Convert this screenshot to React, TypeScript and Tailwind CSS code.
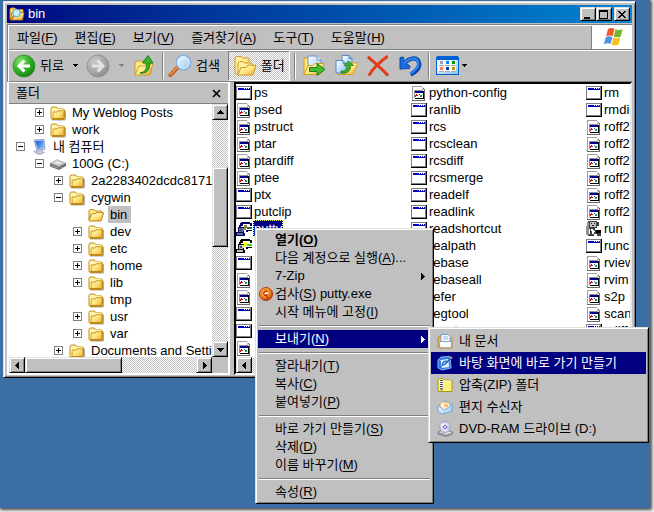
import { useState, type ReactNode } from "react";
import clsx from "clsx";

type FileKind = "app" | "script" | "putty" | "puttygen" | "run";
type FileEntry = { name: string; kind: FileKind };
type TreeEntry = {
  name: string;
  level: number;
  icon: "folder" | "open" | "computer" | "drive";
  toggle?: "+" | "-";
};

const TREE: TreeEntry[] = [
  { name: "My Weblog Posts", level: 1, icon: "folder", toggle: "+" },
  { name: "work", level: 1, icon: "folder", toggle: "+" },
  { name: "내 컴퓨터", level: 0, icon: "computer", toggle: "-" },
  { name: "100G (C:)", level: 1, icon: "drive", toggle: "-" },
  { name: "2a2283402dcdc81711c9", level: 2, icon: "folder", toggle: "+" },
  { name: "cygwin", level: 2, icon: "folder", toggle: "-" },
  { name: "bin", level: 3, icon: "open" },
  { name: "dev", level: 3, icon: "folder", toggle: "+" },
  { name: "etc", level: 3, icon: "folder", toggle: "+" },
  { name: "home", level: 3, icon: "folder", toggle: "+" },
  { name: "lib", level: 3, icon: "folder", toggle: "+" },
  { name: "tmp", level: 3, icon: "folder" },
  { name: "usr", level: 3, icon: "folder", toggle: "+" },
  { name: "var", level: 3, icon: "folder", toggle: "+" },
  { name: "Documents and Settings", level: 2, icon: "folder", toggle: "+" },
];

const LEVELS = ["pl-[7px]", "pl-[26px]", "pl-[45px]", "pl-[64px]"];

const a = (name: string): FileEntry => ({ name, kind: "app" });
const s = (name: string): FileEntry => ({ name, kind: "script" });

const COLUMNS: FileEntry[][] = [
  [
    a("ps"), s("psed"), s("pstruct"), s("ptar"), s("ptardiff"), s("ptee"), a("ptx"), a("putclip"),
    { name: "putty", kind: "putty" },
    { name: "", kind: "puttygen" },
    a(""), s(""), s(""), a(""), a(""), s(""),
  ],
  [
    s("python-config"), a("ranlib"), a("rcs"), a("rcsclean"), a("rcsdiff"), a("rcsmerge"), a("readelf"),
    a("readlink"), a("readshortcut"), a("realpath"), a("rebase"), s("rebaseall"), a("refer"), a("regtool"),
    a("reset"),
  ],
  [
    a("rm"), a("rmdir"), s("roff2dvi"), s("roff2html"), s("roff2pdf"), s("roff2ps"), s("roff2text"), s("roff2x"),
    { name: "run", kind: "run" },
    a("runc"), s("rview"), s("rvim"), s("s2p"), s("scan"), a("sdiff"),
  ],
];

const RAISED =
  "border border-t-[#dfdfdf] border-l-[#dfdfdf] border-r-black border-b-black bg-[#c0c0c0] shadow-[inset_1px_1px_0_#fff,inset_-1px_-1px_0_#808080]";
const CHECKER =
  "bg-[conic-gradient(#fff_25%,#c0c0c0_0_50%,#fff_0_75%,#c0c0c0_0)] bg-[length:2px_2px]";

function SharedDefs() {
  return (
    <svg className="absolute size-0" aria-hidden="true">
      <defs>
        <linearGradient id="gold" x1="0" y1="0" x2="1" y2="1">
          <stop offset="0" stopColor="#fffbc0" />
          <stop offset="0.55" stopColor="#ffe680" />
          <stop offset="1" stopColor="#e8a628" />
        </linearGradient>
        <radialGradient id="green" cx="0.35" cy="0.3" r="0.8">
          <stop offset="0" stopColor="#8be070" />
          <stop offset="0.5" stopColor="#35b32b" />
          <stop offset="1" stopColor="#117a10" />
        </radialGradient>
        <radialGradient id="silver" cx="0.35" cy="0.3" r="0.8">
          <stop offset="0" stopColor="#cacaca" />
          <stop offset="1" stopColor="#8b8b8b" />
        </radialGradient>
        <linearGradient id="sky" x1="0" y1="0" x2="1" y2="1">
          <stop offset="0" stopColor="#ffffff" />
          <stop offset="1" stopColor="#8cc4f4" />
        </linearGradient>
        <linearGradient id="screen" x1="0" y1="0" x2="1" y2="1">
          <stop offset="0" stopColor="#1b50d8" />
          <stop offset="1" stopColor="#7ec8ff" />
        </linearGradient>
        <radialGradient id="ember" cx="0.4" cy="0.35" r="0.7">
          <stop offset="0" stopColor="#ffe05a" />
          <stop offset="0.6" stopColor="#f08a1c" />
          <stop offset="1" stopColor="#a81c08" />
        </radialGradient>
      </defs>
    </svg>
  );
}

function Svg({ size = 16, crisp, children }: { size?: 16 | 24; crisp?: boolean; children: ReactNode }) {
  return (
    <svg
      viewBox={size === 16 ? "0 0 16 16" : "0 0 24 24"}
      className={clsx("shrink-0", size === 16 ? "size-4" : "size-6")}
      shapeRendering={crisp ? "crispEdges" : undefined}
      fill="none"
      aria-hidden="true"
    >
      {children}
    </svg>
  );
}

function FolderIcon() {
  return (
    <Svg>
      <path d="M2 15h13.5V6" stroke="#77777799" />
      <path d="M1 13.5V3.5l1-1.5h4.5l1.2 1.5H13l1.5 1.5v8.5l-.5 1H2z" fill="url(#gold)" stroke="#c08a1e" />
      <path d="M1.8 5.6h4.5L7.6 4H13" stroke="#fff6c0" />
      <path d="M3 7h4l1-1.2h6" stroke="#c89a2c" />
      <path d="M3.2 7.5v6M13.5 7v6" stroke="#d6a63a" />
      <path d="M2 13.6h12" stroke="#b97f12" />
    </Svg>
  );
}

function OpenFolderIcon() {
  return (
    <Svg>
      <path d="M1 13V4l1-1.5h4L7.5 4H13l1 1v3" fill="#ffe680" stroke="#c08a1e" />
      <path d="M1 13.5 3.4 7h4L8.5 5.7h7L13.4 13l-.9 1H1.5z" fill="url(#gold)" stroke="#b58010" />
      <path d="M4 8h4l1-1.2h5" stroke="#fffad0" />
    </Svg>
  );
}

function ComputerIcon() {
  return (
    <Svg>
      <path d="m3 1 10-.5 1 9.5-8 1.5z" fill="#d4dcea" stroke="#6c80a8" strokeWidth=".7" />
      <path d="m4.2 2 7.9-.4.8 7.4-6.1 1.2z" fill="url(#screen)" />
      <path d="m5.5 11.5 5-1 1 2 2 1-5 2.2-4-1.8z" fill="#c5cbdc" stroke="#8088a0" strokeWidth=".6" />
      <path d="m3 11 1.5 1-.5 2-1.5-1z" fill="#9fb8d8" />
    </Svg>
  );
}

function DriveIcon() {
  return (
    <Svg>
      <path d="m0 7.5 7-4 9 3.5v3l-7 4-9-3.5z" fill="#6c6c6c" />
      <path d="m0 7 7-3.5L16 7l-7 3.8z" fill="#c4c4c4" />
      <path d="m3 7 4-2 5 2-3 1.5z" fill="#e9e9e9" />
      <path d="m1 8.6 7.5 3v1.2L1 10z" fill="#9a9a9a" />
      <path d="M11 11.5h1.6" stroke="#5fd05f" />
    </Svg>
  );
}

function AppIcon() {
  return (
    <Svg crisp>
      <path d="M0 1h16v14H0z" fill="#000" />
      <path d="M0 1h15v13H0z" fill="#808080" />
      <path d="M1 2h13v11H1z" fill="#fff" />
      <path d="M2 3h12v2H2z" fill="#0000c0" />
      <path d="M8 3h1v1H8zM10 3h1v1h-1zM12 3h1v1h-1z" fill="#fff" />
    </Svg>
  );
}

function ScriptIcon() {
  return (
    <Svg crisp>
      <path d="M1 1h10v1h1v1h1v1h1v12H1z" fill="#686868" />
      <path d="M1 1h10v1H2v13H1z" fill="#a0a0a0" />
      <path d="M2 2h9v3h2v10H2z" fill="#fff" />
      <path d="M11 2h1v2h1v1h-2z" fill="#c8c8c8" />
      <path d="M3 5h9v8H3z" fill="#909090" />
      <path d="M12 6h1v8H4v-1h8z" fill="#000" />
      <path d="M4 6h8v7H4z" fill="#fff" />
      <path d="M4 6h8v2H4z" fill="#000090" />
      <path d="M5 9h1v1h1v1H5v1H4v-2h1z" fill="#d01010" />
      <path d="M8 9h1v1H8z" fill="#2040d0" />
      <path d="M9 10h2v2H9z" fill="#10a040" />
    </Svg>
  );
}

function PuttyIcon({ selected }: { selected?: boolean }) {
  const ink = selected ? "#000060" : "#000000";
  const body = selected ? "#5c6ca0" : "#c0c0c0";
  return (
    <Svg crisp>
      <path d="M5 1h9v1h2v3h-2V3H7v2H5v4H3V4h1V2h1z" fill={ink} />
      <path d="M2 6h6v6H2z" fill={ink} />
      <path d="M3 7h4v4H3z" fill={body} />
      <path d="M4 8h2v2H4z" fill="#305090" />
      <path d="M0 11h8v1h1v3H0z" fill={ink} />
      <path d="M1 12h6v2H1z" fill={body} />
      <path d="M8 4h3v2h1v1h-2v2H8v1H7V8H6V7h2z" fill={selected ? "#908040" : "#ffff00"} />
      <path d="M11 6h5v2h-5z" fill={selected ? "#107050" : "#20e020"} />
      <path d="M10 9h6v1h-4v1h-2z" fill={ink} />
    </Svg>
  );
}

function RunIcon() {
  return (
    <Svg crisp>
      <path d="M2 0h9v1h2v4h-2v2H9v2h2v3h2v-2h2v5h-4v-2H8V9H6v4h2v2H2v-2h2V8H2z" fill="#404040" />
      <path d="M1 1h2v13H0V5h1z" fill="#909090" />
      <path d="M4 1h6v5H4z" fill="#c0c0c0" />
      <path d="M5 2h1v1H5zM8 2h1v1H8zM6 4h2v1H6z" fill="#202020" />
      <path d="M5 8h2v2H5zM7 10h2v1H7z" fill="#fff" />
      <path d="M10 9h5v3h-5z" fill="#000" />
    </Svg>
  );
}

function FileIcon({ kind }: { kind: FileKind }) {
  if (kind === "script") return <ScriptIcon />;
  if (kind === "putty") return <PuttyIcon selected />;
  if (kind === "puttygen") return <PuttyIcon />;
  if (kind === "run") return <RunIcon />;
  return <AppIcon />;
}

function TreeIcon({ icon }: { icon: TreeEntry["icon"] }) {
  if (icon === "computer") return <ComputerIcon />;
  if (icon === "drive") return <DriveIcon />;
  if (icon === "open") return <OpenFolderIcon />;
  return <FolderIcon />;
}

function SearchFolderIcon() {
  return (
    <Svg>
      <path d="M1 13V3l1-1h4l1.5 1.5H14V8" fill="#ffd866" stroke="#c08a1e" />
      <path d="M1.5 14 3 6.5h12L13.5 14z" fill="url(#gold)" stroke="#b58010" />
      <path d="m5 10-3 4" stroke="#e07020" strokeWidth="2" />
      <circle cx="7.5" cy="7" r="3.8" fill="#c6ecff" stroke="#5c9ccc" />
    </Svg>
  );
}

function ArrowDisc({ forward }: { forward?: boolean }) {
  return (
    <Svg size={24}>
      <circle cx="12" cy="12" r="11" fill={forward ? "url(#silver)" : "url(#green)"} stroke={forward ? "#888" : "#2b8a20"} strokeWidth=".7" />
      <path
        d={forward ? "M6 12h10M11.5 6.5 17 12l-5.5 5.5" : "M18 12H8M12.5 6.5 7 12l5.5 5.5"}
        stroke={forward ? "#e4e4e4" : "#fff"}
        strokeWidth="3"
      />
    </Svg>
  );
}

function UpFolderIcon() {
  return (
    <Svg size={24}>
      <path d="M3 20V9l2-2h5l2 2h7v11z" fill="#ffe680" stroke="#cf9c26" />
      <path d="m3 21 4-9h6l1-2h7l-4 11z" fill="url(#gold)" stroke="#cf9c26" />
      <path d="M8 19c6-1 7-5 6.5-10h-4L16 1.5 21 9h-3.5c1 6-2 11-9.5 10z" fill="#37b52c" stroke="#1d7f18" />
    </Svg>
  );
}

function SearchIcon() {
  return (
    <Svg size={24}>
      <path d="m2.5 21 7-7.5" stroke="#ad4d18" strokeWidth="4" strokeLinecap="round" />
      <path d="m2.5 20.500 7-7.5" stroke="#f28b3c" strokeWidth="2.2" strokeLinecap="round" />
      <circle cx="15.5" cy="8.5" r="7.2" fill="url(#sky)" stroke="#86aee0" strokeWidth="1.6" />
      <circle cx="15.5" cy="8.5" r="5.8" stroke="#e2f4ff" />
    </Svg>
  );
}

function FoldersIcon() {
  return (
    <Svg size={24}>
      <path d="M2 17V4l1.5-1.5H8L9.5 4H15l1 1.5V8" fill="url(#gold)" stroke="#d09820" />
      <path d="M5 20V9l1.500-1.500H10L11.5 9H18l1 1.5V13" fill="#fff0a0" stroke="#d09820" />
      <path d="m5 21 3-7.5h5L15 11l8 .5L20 21z" fill="url(#gold)" stroke="#d09820" />
      <path d="M2 17v2l3 2" stroke="#d09820" />
    </Svg>
  );
}

function MoveToIcon() {
  return (
    <Svg size={24}>
      <path d="M2 20V4h5l2 2v14z" fill="#ffe680" stroke="#d0a020" />
      <path d="M6 2h9l4 4v13H6z" fill="url(#sky)" stroke="#6d92d0" />
      <path d="M15 2v4h4" fill="#fff" stroke="#6d92d0" />
      <path d="m2 20.5 4-9h5l2-2h9l-4 11z" fill="url(#gold)" stroke="#d0a020" />
      <path d="M7.5 13.5H15V9.5l8 6-8 6v-4H7.5z" fill="#45bb32" stroke="#208018" />
    </Svg>
  );
}

function CopyToIcon() {
  return (
    <Svg size={24}>
      <path d="M8 1.5h7l3 3V14H8z" fill="url(#sky)" stroke="#5b86cc" />
      <path d="M15 1.5v3h3" stroke="#5b86cc" />
      <path d="m4 20.5 4-10h6l1-1.5h9l-5 11.5z" fill="url(#gold)" stroke="#d0a020" />
      <path d="M2 6.5h7l3 3V19H2z" fill="url(#sky)" stroke="#5b86cc" />
      <path d="M9 6.5v3h3" stroke="#5b86cc" />
      <path d="M7 17c5 .5 6.5-2 6-5.5h-3L14.5 7l5 4.5h-3C17 17 13 20 7 19z" fill="#3cae28" stroke="#1d7f18" strokeWidth=".8" />
    </Svg>
  );
}

function DeleteIcon() {
  return (
    <Svg size={24}>
      <path d="M2 3c6 5 14 12 20 18.5M21.5 2.5C14 8 7 14 3 21.5" stroke="#9c2d10" strokeWidth="2.6" />
      <path d="M2 2.5c6 5 14 12 20 18.5M21.5 2C14 7.5 7 13.5 3 21" stroke="#f43b12" strokeWidth="2.2" />
    </Svg>
  );
}

function UndoIcon() {
  return (
    <Svg size={24}>
      <path d="M6 10c4-6 13-8 15-1.5 1.500 6-4 10-8.5 12" stroke="#0b47a8" strokeWidth="4.2" />
      <path d="M2 3.5 5.500 3 6 8l6 4-.5 2.500-9.500.5z" fill="#1d6ad8" stroke="#0b47a8" />
      <path d="M6 9.500c4-5 12-7.5 14-1.5 1.5 5.5-4 9-7.5 11.5" stroke="#2e82ec" strokeWidth="2.4" />
    </Svg>
  );
}

function ViewsIcon() {
  const dots = [
    ["#9c9ccc", 4, 8], ["#0b84e8", 10, 8], ["#079400", 16, 8],
    ["#ff7a52", 4, 14], ["#003c98", 10, 14], ["#cc9400", 16, 14],
  ] as const;
  return (
    <Svg size={24} crisp>
      <path d="M1 2h21v1h1v18H0V3h1z" fill="#0060d8" />
      <path d="M1 6h21v14H1z" fill="url(#sky)" />
      <path d="M2 7h18v11H2z" fill="#f6faff" />
      {dots.map(([fill, x, y]) => (
        <g key={fill}>
          <rect x={x} y={y - 1} width="3" height="3" fill={fill} />
          <rect x={x - 1} y={y + 3} width="5" height="1" fill="#a8a8a8" />
        </g>
      ))}
    </Svg>
  );
}

function WindowsFlag() {
  return (
    <Svg size={24}>
      <path d="M7 3c2.600-1.300 4.400-1.200 6.500-.2l-1.800 7.4c-2.200-1.100-4-1.100-6.600 0z" fill="#f0592b" />
      <path d="M14.500 3.200c2.600 1.100 4.500 1 7.200-.2l-2 7.400c-2.700 1.200-4.500 1.100-7 0z" fill="#76b82a" />
      <path d="M4.800 11.200c2.600-1.200 4.500-1.100 6.600 0l-1.800 6.800c-2.200-1.100-4-1.100-6.800.2z" fill="#4d93e6" />
      <path d="M12.500 11.600c2.600 1.100 4.500 1.100 6.900 0l-1.800 7c-2.600 1.300-4.500 1.200-7 0z" fill="#fbc01c" />
    </Svg>
  );
}

function ScanIcon() {
  return (
    <Svg>
      <circle cx="8" cy="8" r="6.5" fill="url(#ember)" stroke="#b8370c" />
      <circle cx="7.5" cy="7.500" r="3.6" fill="#fff3c0" stroke="#e87a18" strokeWidth="1.2" />
      <path d="M9.500 5.500C6.500 4.500 5 7 6 8.500s3 1 3-.5v4" stroke="#c4300c" strokeWidth="1.500" />
    </Svg>
  );
}

function DocumentsIcon() {
  return (
    <Svg>
      <path d="M1 14V5l1.5-2H5v12z" fill="#f0b83c" stroke="#b8862a" />
      <path d="M4 1.5h7l2 2V9H4z" fill="#fff" stroke="#6c9cdc" />
      <path d="M6 4h5M6 6h5" stroke="#8cb4e8" />
      <path d="M2 8.500h12.5V14l-1 1H3z" fill="#f6fbff" stroke="#7ea6d8" />
      <path d="M15 4v11H3" stroke="#c8962c" />
    </Svg>
  );
}

function DesktopIcon() {
  return (
    <Svg>
      <path d="M1 5 4 2l9-.5L14 13l-9 2-4-2z" fill="#2c7ce4" stroke="#80baf8" />
      <path d="m3.5 5 8-1 .5 8-7 1z" fill="#e8f5ff" />
      <path d="M6 11c-1.5-4 2-6 5-4" stroke="#1b64c8" strokeWidth="1.4" />
      <path d="m7 10 7.5-7.5" stroke="#1b64c8" strokeWidth="1.6" />
      <path d="m13.5 3.5 1.5-1.5" stroke="#f09040" strokeWidth="2" />
    </Svg>
  );
}

function ZipIcon() {
  return (
    <Svg>
      <path d="M1 14.5V3l1-1.5h4L7.5 3H14l1 1.5v10z" fill="#fff27a" stroke="#a89a10" />
      <path d="M2 5h5l1-1h6" stroke="#fffcd0" />
      <path d="M4.500 3v9" stroke="#fff" strokeWidth="3" />
      <path d="M4.500 3v9" stroke="#333" strokeWidth="2.5" strokeDasharray="1 1" />
      <path d="M3.500 11h2v2.5h-2z" fill="#777" />
    </Svg>
  );
}

function MailIcon() {
  return (
    <Svg>
      <path d="m1 7 7-5.5L15 5v7L5 15l-4-2.5z" fill="#b4dcfa" stroke="#78a8d4" />
      <path d="M3 7.5 4 3l8 .5 1 4.5-6 3z" fill="#fff3d8" stroke="#e0b080" />
      <path d="M7 5h4v3H7z" fill="#ffbe74" />
      <path d="m1 7 6.5 4L15 6v6.5L5 15l-4-2.5z" fill="url(#sky)" stroke="#78a8d4" strokeWidth=".8" />
    </Svg>
  );
}

function DiscDriveIcon() {
  return (
    <Svg>
      <path d="m1 11 5-2.5L15.5 11v2L9 15.5 1 13z" fill="#a2a2aa" stroke="#6c6c78" strokeWidth=".7" />
      <path d="m2 11 5-1.5 8 1.8-5.5 2z" fill="#e2e2ea" />
      <ellipse cx="8" cy="6" rx="5.2" ry="5.5" fill="#dcdcf4" stroke="#9090a8" strokeWidth=".8" />
      <path d="M8 6 5 1.8 3.2 4z" fill="#fff" />
      <path d="m8 6 4.800-1-.5 4z" fill="#b8c0f0" />
      <circle cx="8" cy="6" r="1.5" fill="#fff" stroke="#7458b8" />
    </Svg>
  );
}

function Caret({ muted }: { muted?: boolean }) {
  return (
    <svg viewBox="0 0 8 8" className="size-2" shapeRendering="crispEdges" aria-hidden="true">
      <path d="M1 2h5v1H5v1H4v1H3V4H2V3H1z" fill={muted ? "#808080" : "#000"} />
    </svg>
  );
}

function ScrollButton({ dir }: { dir: "up" | "down" | "left" | "right" }) {
  const paths = {
    up: "M6 4h1v1h1v1h1v1h1v1H3V7h1V6h1V5h1z",
    down: "M3 5h7v1H9v1H8v1H7v1H6V8H5V7H4V6H3z",
    left: "M7 3h1v7H7V9H6V8H5V7H4V6h1V5h1V4h1z",
    right: "M5 3h1v1h1v1h1v1h1v1H8v1H7v1H6v1H5z",
  };
  return (
    <button aria-label={"Scroll " + dir} className={clsx("flex size-4 shrink-0 items-center justify-center", RAISED)}>
      <svg viewBox="0 0 13 13" className="size-[13px] shrink-0" shapeRendering="crispEdges" aria-hidden="true">
        <path d={paths[dir]} fill="#000" />
      </svg>
    </button>
  );
}

function HotkeyLabel({ text, hotkey, rest }: { text: string; hotkey?: string; rest?: string }) {
  return (
    <span className="whitespace-pre">
      {text}
      {hotkey && (
        <>
          (<u className="underline-offset-2">{hotkey}</u>)
        </>
      )}
      {rest}
    </span>
  );
}

function TitleBar() {
  const button = clsx("flex h-[14px] w-4 items-center justify-center", RAISED);
  return (
    <header className="flex h-[18px] items-center bg-linear-to-r from-[#000080] to-[#1084d0] px-[2px] text-white">
      <SearchFolderIcon />
      <h1 className="ml-[3px] flex-1">bin</h1>
      <button aria-label="Minimize" className={button}>
        <svg viewBox="0 0 12 12" className="size-3 shrink-0" shapeRendering="crispEdges">
          <path d="M2 9h6v2H2z" />
        </svg>
      </button>
      <button aria-label="Maximize" className={button}>
        <svg viewBox="0 0 12 12" className="size-3 shrink-0" shapeRendering="crispEdges">
          <path d="M1 2h9v9H1zM2 4v6h7V4z" fillRule="evenodd" />
        </svg>
      </button>
      <button aria-label="Close" className={clsx("ml-[2px]", button)}>
        <svg viewBox="0 0 12 12" className="size-3 shrink-0" shapeRendering="crispEdges">
          <path d="M2 3h2v1h1v1h2V4h1V3h2v1H9v1H8v1H7v1h1v1h1v1h1v1H8V9H7V8H5v1H4v1H2V9h1V8h1V7h1V6H4V5H3V4H2z" />
        </svg>
      </button>
    </header>
  );
}

const MENUS = [
  ["파일", "F"],
  ["편집", "E"],
  ["보기", "V"],
  ["즐겨찾기", "A"],
  ["도구", "T"],
  ["도움말", "H"],
];

function MenuBar() {
  return (
    <nav className="flex h-[24px] border-b border-[#808080]">
      <div className="flex flex-1 items-center gap-px border-r border-[#808080]">
        {MENUS.map(([text, hotkey]) => (
          <button key={text} className="px-2">
            <HotkeyLabel text={text} hotkey={hotkey} />
          </button>
        ))}
      </div>
      <div className="flex w-10 items-center justify-center border-l border-white bg-white">
        <WindowsFlag />
      </div>
    </nav>
  );
}

function Divider() {
  return <div className="h-[26px] w-[2px] border-l border-[#808080] bg-white" />;
}

function Toolbar({ showTree, onToggleTree }: { showTree: boolean; onToggleTree: () => void }) {
  return (
    <div className="flex h-8 items-center border-t border-b border-t-white border-b-[#808080] pl-[3px]">
      <button className="flex items-center gap-1">
        <ArrowDisc />
        뒤로
      </button>
      <button aria-label="Back history" className="ml-2">
        <Caret />
      </button>
      <button aria-label="Forward" className="ml-[6px]">
        <ArrowDisc forward />
      </button>
      <button aria-label="Forward history" className="ml-2">
        <Caret muted />
      </button>
      <button aria-label="Up" className="mx-[6px]">
        <UpFolderIcon />
      </button>
      <Divider />
      <button className="ml-1 flex items-center gap-1">
        <SearchIcon />
        검색
      </button>
      <button
        aria-pressed={showTree}
        onClick={onToggleTree}
        className={clsx(
          "mx-2 mr-1 flex h-[30px] items-center gap-1 border border-t-[#808080] border-l-[#808080] border-r-white border-b-white px-1",
          showTree && CHECKER
        )}
      >
        <FoldersIcon />
        폴더
      </button>
      <Divider />
      <div className="mx-[6px] flex gap-2">
        <button aria-label="Move to"><MoveToIcon /></button>
        <button aria-label="Copy to"><CopyToIcon /></button>
        <button aria-label="Delete"><DeleteIcon /></button>
        <button aria-label="Undo"><UndoIcon /></button>
      </div>
      <Divider />
      <button aria-label="Views" className="ml-[6px] flex items-center gap-px">
        <ViewsIcon />
        <Caret />
      </button>
    </div>
  );
}

function TreePane({ onClose }: { onClose: () => void }) {
  return (
    <aside className="mr-1 flex w-[223px] shrink-0 flex-col border-t border-r-2 border-b-2 border-l-2 border-white">
      <div className="flex h-[21px] items-center justify-between border-b border-[#808080] px-[7px]">
        <h2>폴더</h2>
        <button aria-label="Close folders" onClick={onClose}>
          <svg viewBox="0 0 9 9" className="size-[9px]" aria-hidden="true">
            <path d="m1 1 7 7M8 1 1 8" stroke="#000" strokeWidth="1.6" />
          </svg>
        </button>
      </div>
      <div className="flex h-[253px]">
        <ul className="min-w-0 flex-1 overflow-hidden bg-white">
          {TREE.map((item) => (
            <li key={item.name} className={clsx("flex h-[17px] items-center whitespace-nowrap", LEVELS[item.level])}>
              {item.toggle ? (
                <button aria-label={"Toggle " + item.name} className="shrink-0">
                  <svg viewBox="0 0 9 9" className="size-[9px]" shapeRendering="crispEdges">
                    <path d="M0 0h9v9H0z" fill="#808080" />
                    <path d="M1 1h7v7H1z" fill="#fff" />
                    <path d={item.toggle === "+" ? "M2 4h2V2h1v2h2v1H5v2H4V5H2z" : "M2 4h5v1H2z"} fill="#000" />
                  </svg>
                </button>
              ) : (
                <span className="w-[9px] shrink-0" />
              )}
              <button className="ml-[6px] flex h-[17px] items-center gap-1">
                <TreeIcon icon={item.icon} />
                <span className={clsx("px-[2px] leading-[17px]", item.icon === "open" && "bg-[#c0c0c0] pr-1")}>
                  {item.name}
                </span>
              </button>
            </li>
          ))}
        </ul>
        <div className={clsx("flex w-4 flex-col", CHECKER)}>
          <ScrollButton dir="up" />
          <div className="flex-1" />
          <div className={clsx("h-20", RAISED)} />
          <div className="flex-2" />
          <ScrollButton dir="down" />
        </div>
      </div>
      <div className="flex h-4">
        <div className={clsx("flex flex-1", CHECKER)}>
          <ScrollButton dir="left" />
          <div className={clsx("w-[97px]", RAISED)} />
          <div className="flex-1" />
          <ScrollButton dir="right" />
        </div>
        <div className="w-4 bg-[#c0c0c0]" />
      </div>
    </aside>
  );
}

function FileList() {
  return (
    <main className="flex min-w-0 flex-1 flex-col border-2 border-t-black border-l-black border-r-[#e8e8e8] border-b-white bg-white">
      <div className="flex flex-1 overflow-hidden pb-px">
        {COLUMNS.map((files, i) => (
          <ul key={i} className="w-[175px] shrink-0">
            {files.map((file, j) => (
              <li key={j} className="h-[17px]">
                <button aria-label={file.name || "file"} className="flex h-[17px] items-center">
                  <FileIcon kind={file.kind} />
                  <span
                    className={clsx(
                      "ml-px px-px leading-[17px]",
                      file.kind === "putty" && "bg-[#000080] text-white outline-1 -outline-offset-1 outline-[#ffff60] outline-dotted"
                    )}
                  >
                    {file.name}
                  </span>
                </button>
              </li>
            ))}
          </ul>
        ))}
      </div>
      <div className={clsx("flex h-4", CHECKER)}>
        <ScrollButton dir="left" />
        <div className="flex-1" />
        <div className={clsx("w-6", RAISED)} />
        <div className="flex-1" />
        <ScrollButton dir="right" />
      </div>
    </main>
  );
}

type MenuEntry = {
  text: string;
  hotkey?: string;
  rest?: string;
  bold?: boolean;
  submenu?: boolean;
  active?: boolean;
  icon?: ReactNode;
};

const CONTEXT_GROUPS: MenuEntry[][] = [
  [
    { text: "열기", hotkey: "O", bold: true },
    { text: "다음 계정으로 실행", hotkey: "A", rest: "..." },
    { text: "7-Zip", submenu: true },
    { text: "검사", hotkey: "S", rest: " putty.exe", icon: <ScanIcon /> },
    { text: "시작 메뉴에 고정", hotkey: "I" },
  ],
  [{ text: "보내기", hotkey: "N", submenu: true, active: true }],
  [
    { text: "잘라내기", hotkey: "T" },
    { text: "복사", hotkey: "C" },
    { text: "붙여넣기", hotkey: "P" },
  ],
  [
    { text: "바로 가기 만들기", hotkey: "S" },
    { text: "삭제", hotkey: "D" },
    { text: "이름 바꾸기", hotkey: "M" },
  ],
  [{ text: "속성", hotkey: "R" }],
];

const SEND_TO: MenuEntry[] = [
  { text: "내 문서", icon: <DocumentsIcon /> },
  { text: "바탕 화면에 바로 가기 만들기", icon: <DesktopIcon />, active: true },
  { text: "압축(ZIP) 폴더", icon: <ZipIcon /> },
  { text: "편지 수신자", icon: <MailIcon /> },
  { text: "DVD-RAM 드라이브 (D:)", icon: <DiscDriveIcon /> },
];

function ContextMenu() {
  return (
    <div role="menu" className={clsx("absolute top-[228px] left-[255px] w-[179px] p-[2px]", RAISED)}>
      {CONTEXT_GROUPS.map((group, i) => (
        <div key={i}>
          {i > 0 && <div className="mx-px mt-1 mb-[3px] h-[2px] border-t border-b border-t-[#808080] border-b-white" />}
          {group.map((item) => (
            <button
              key={item.text}
              role="menuitem"
              className={clsx(
                "flex h-[18px] w-full items-center gap-px pr-[6px]",
                item.active && "bg-[#000080] text-white",
                item.bold && "font-bold"
              )}
            >
              <span className="flex w-4 justify-end">{item.icon}</span>
              <HotkeyLabel text={item.text} hotkey={item.hotkey} rest={item.rest} />
              {item.submenu && (
                <svg viewBox="0 0 4 7" className="ml-auto h-[7px] w-1" fill="currentColor" shapeRendering="crispEdges">
                  <path d="M0 0h1v1h1v1h1v1h1v1H3v1H2v1H1v1H0z" />
                </svg>
              )}
            </button>
          ))}
        </div>
      ))}
    </div>
  );
}

function SendToMenu() {
  return (
    <div role="menu" className={clsx("absolute top-[327px] left-[428px] w-[221px] p-[2px]", RAISED)}>
      {SEND_TO.map((item) => (
        <button
          key={item.text}
          role="menuitem"
          className={clsx("flex h-[22px] w-full items-center gap-[6px] pl-[6px]", item.active && "bg-[#000080] text-white")}
        >
          {item.icon}
          <HotkeyLabel text={item.text} />
        </button>
      ))}
    </div>
  );
}

export default function App() {
  const [showTree, setShowTree] = useState(true);

  return (
    <div className="flex min-h-screen bg-[#f4f4f4] pr-1 pb-1 font-['Liberation_Sans','Noto_Sans_CJK_KR',sans-serif] text-[13px] leading-4 text-black">
      <SharedDefs />
      <div className="relative min-w-0 flex-1 bg-[#3a6ea5] pt-px pr-[14px] pl-[3px] shadow-[1px_1px_3px_1px_#000000b0]">
        <div className="border border-t-[#dfdfdf] border-r-black border-b-black border-l-[#dfdfdf] bg-[#c0c0c0] p-[3px] pb-[2px] shadow-[inset_1px_1px_0_#fff,inset_-1px_-1px_0_#808080]">
          <TitleBar />
          <div className="mt-px border-t border-l border-[#808080]">
            <div className="border-t border-l border-white">
              <MenuBar />
              <Toolbar showTree={showTree} onToggleTree={() => setShowTree(!showTree)} />
            </div>
          </div>
          <div className="flex">
            {showTree && <TreePane onClose={() => setShowTree(false)} />}
            <FileList />
          </div>
        </div>
        <ContextMenu />
        <SendToMenu />
      </div>
    </div>
  );
}
